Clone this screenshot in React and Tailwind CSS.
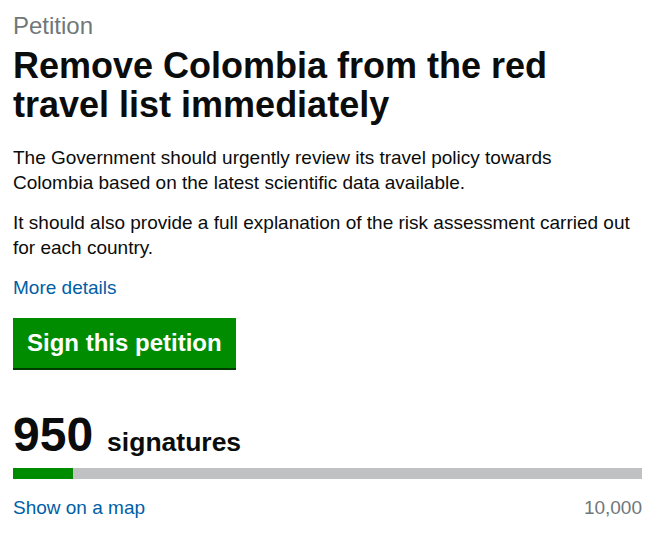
export default function App() {
  return (
    <div
      className="w-[655px] h-[534px] bg-white px-[13px] pt-[11px] text-[#0b0c0c]"
      style={{ fontFamily: '"Liberation Sans", Arial, sans-serif' }}
    >
      <div className="text-[24px] leading-[30px] text-[#6f777b]">Petition</div>
      <h1 className="text-[36px] leading-[39px] font-bold mt-[5px]">
        Remove Colombia from the red travel list immediately
      </h1>
      <p className="max-w-[620px] text-[19px] leading-[25px] mt-[21px] mb-[15px]">
        The Government should urgently review its travel policy towards Colombia based on the latest scientific data available.
      </p>
      <p className="text-[19px] leading-[25px] mb-[15px]">
        It should also provide a full explanation of the risk assessment carried out for each country.
      </p>
      <a href="#" className="block text-[19px] leading-[25px] text-[#005ea5]">
        More details
      </a>
      <button className="mt-[18px] h-[52px] px-[14px] bg-[#008c00] text-white text-[24px] font-bold leading-[50px] border-b-2 border-[#003c00]">
        Sign this petition
      </button>
      <div className="mt-[37px] flex items-baseline">
        <span className="text-[48px] leading-[56px] font-bold">950</span>
        <span className="ml-[14px] text-[26.5px] font-bold">signatures</span>
      </div>
      <div className="mt-[5px] h-[11px] bg-[#bfc1c3]">
        <div className="h-full bg-[#008c00]" style={{ width: "9.5%" }} />
      </div>
      <div className="mt-[16px] flex justify-between text-[19px] leading-[25px]">
        <a href="#" className="text-[#005ea5]">Show on a map</a>
        <span className="text-[#6f777b]">10,000</span>
      </div>
    </div>
  );
}
